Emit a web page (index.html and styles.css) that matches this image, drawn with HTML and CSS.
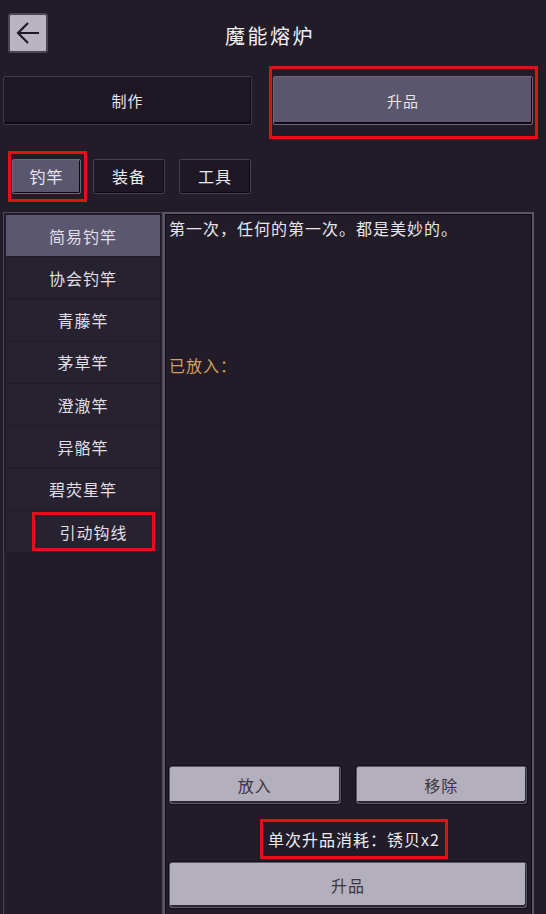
FILE: index.html
```html
<!DOCTYPE html>
<html lang="zh-CN">
<head>
    <meta charset="UTF-8">
    <meta name="viewport" content="width=device-width, initial-scale=1.0">
    <title>魔能熔炉</title>
    <link rel="stylesheet" href="styles.css">
</head>
<body>
    <div class="header">
        <button class="back-btn">
            <svg width="26" height="24" viewBox="0 0 26 24">
                <path d="M24 12H3M13 2L3 12l10 10" fill="none" stroke="#1e1a24" stroke-width="2.2"/>
            </svg>
        </button>
        <h1 class="title">魔能熔炉</h1>
    </div>

    <div class="main-tabs">
        <div class="main-tab">制作</div>
        <div class="main-tab-wrap mark">
            <div class="main-tab active">升品</div>
        </div>
    </div>

    <div class="cat-tabs">
        <div class="cat-wrap mark">
            <div class="cat-tab active">钓竿</div>
        </div>
        <div class="cat-tab">装备</div>
        <div class="cat-tab">工具</div>
    </div>

    <div class="content">
        <div class="item-list">
            <div class="item active">简易钓竿</div>
            <div class="item">协会钓竿</div>
            <div class="item">青藤竿</div>
            <div class="item">茅草竿</div>
            <div class="item">澄澈竿</div>
            <div class="item">异骼竿</div>
            <div class="item">碧荧星竿</div>
            <div class="item"><span class="mark item-mark">引动钩线</span></div>
        </div>

        <div class="detail">
            <p class="desc">第一次，任何的第一次。都是美妙的。</p>
            <p class="placed">已放入：</p>
            <div class="spacer"></div>
            <div class="btn-row">
                <button class="btn">放入</button>
                <button class="btn">移除</button>
            </div>
            <div class="cost-row">
                <span class="mark cost">单次升品消耗：锈贝x2</span>
            </div>
            <button class="btn btn-big">升品</button>
        </div>
    </div>
</body>
</html>
```

FILE: styles.css
```css
html, body {
    height: 100%;
}

body {
    margin: 0;
    background-color: #211c28;
    color: #e6e3ea;
    font-family: "Noto Sans CJK SC", "Noto Sans", sans-serif;
    letter-spacing: 1px;
    display: flex;
    flex-direction: column;
    overflow: hidden;
}

.mark {
    border: 3px solid #e3101a;
}

/* header */
.header {
    position: relative;
    height: 66px;
    display: flex;
    align-items: center;
    justify-content: center;
}

.back-btn {
    position: absolute;
    left: 8px;
    top: 13px;
    width: 40px;
    height: 40px;
    padding: 0;
    background: #b8b5c0;
    border: 2px solid #4a4656;
    border-radius: 3px;
    display: flex;
    align-items: center;
    justify-content: center;
}

.title {
    margin: 0 6px -4px 0;
    font-size: 20px;
    letter-spacing: 2.5px;
    font-weight: normal;
    color: #f2f0f5;
}

/* main tabs */
.main-tabs {
    display: flex;
    padding: 0 8px 0 3px;
    gap: 17px;
    height: 73px;
}

.main-tab {
    box-sizing: border-box;
    height: 49px;
    margin-top: 10px;
    flex: 0 0 249px;
    background: #1d1824;
    border: 1px solid #3d3a49;
    box-shadow: inset -1px -2px 0 #0c0a10;
    display: flex;
    align-items: center;
    justify-content: center;
    font-size: 15px;
    color: #e8e6ec;
    border-radius: 2px;
}

.main-tab-wrap {
    flex: 1;
    box-sizing: border-box;
    height: 73px;
    padding: 7px 2px 0 1px;
}

.main-tab-wrap .main-tab {
    margin-top: 0;
    width: 100%;
}

.main-tab.active {
    background: #59566e;
    border-color: #6b687e;
}

/* category tabs */
.cat-tabs {
    display: flex;
    align-items: center;
    gap: 6px;
    padding: 12px 0 0 8px;
    height: 50px;
}

.cat-wrap {
    box-sizing: border-box;
    width: 79px;
    height: 51px;
    padding: 5px 6px 5px 1px;
}

.cat-tab {
    box-sizing: border-box;
    width: 72px;
    height: 35px;
    background: #1d1824;
    border: 1px solid #45424f;
    box-shadow: inset -1px -1px 0 #0c0a10;
    border-radius: 2px;
    display: flex;
    align-items: center;
    justify-content: center;
    font-size: 16px;
    color: #ece9f0;
}

.cat-tab.active {
    width: 69px;
    background: #59566e;
    border-color: #6b687e;
}

.cat-tab + .cat-tab {
    margin-left: 8px;
}

/* content */
.content {
    flex: 1;
    display: flex;
    margin: 11px 12px 0 3px;
    min-height: 0;
}

.item-list {
    box-sizing: border-box;
    width: 160px;
    border: 1px solid #4b4858;
    border-bottom: none;
    padding: 2px 2px 0 2px;
    background: #211c28;
}

.item {
    height: 41px;
    margin-bottom: 1.3px;
    background: #26222f;
    display: flex;
    align-items: center;
    justify-content: center;
    font-size: 16px;
    color: #e2dfe7;
}

.item.active {
    background: #5a576f;
}

.item-mark {
    box-sizing: border-box;
    width: 123px;
    height: 39px;
    display: flex;
    align-items: center;
    justify-content: center;
    margin-left: 21px;
}

.detail {
    flex: 1;
    box-sizing: border-box;
    border: 2px solid #5a5666;
    border-bottom: none;
    box-shadow: inset 1px 1px 0 #0e0c12, inset -1px 0 0 #0e0c12;
    display: flex;
    flex-direction: column;
    padding: 4px 5px 5px 4px;
}

.desc {
    margin: -2px 0 0 0;
    font-size: 16px;
    color: #e8e5ec;
}

.placed {
    margin: 113px 0 0 0;
    font-size: 16px;
    color: #d4a05c;
}

.spacer {
    flex: 1;
}

.btn {
    box-sizing: border-box;
    background: #b3afbc;
    border: 1px solid #5e5b69;
    box-shadow: inset -1px -2px 0 #2c2833, 0 0 0 1px #121016;
    border-radius: 3px;
    font-family: inherit;
    font-size: 16px;
    letter-spacing: 1px;
    color: #3a3641;
    padding: 0;
}

.btn-row {
    display: flex;
    gap: 15px;
}

.btn-row .btn {
    flex: 1;
    height: 38px;
}

.cost-row {
    display: flex;
    justify-content: center;
    margin: 15px 0 3px 0;
    padding-left: 12px;
}

.cost {
    box-sizing: border-box;
    height: 40px;
    padding: 0 5px;
    display: flex;
    align-items: center;
    font-size: 16px;
    color: #efedf2;
}

.btn-big {
    height: 46px;
    width: 100%;
    margin-bottom: 1px;
}
```
